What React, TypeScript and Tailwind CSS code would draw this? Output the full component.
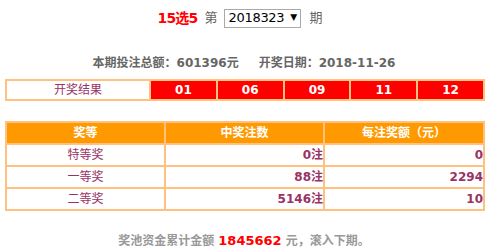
const font = { fontFamily: '"DejaVu Sans", "Noto Sans CJK SC", sans-serif' }

const balls = ['01', '06', '09', '11', '12']

const prizes = [
  { name: '特等奖', count: '0注', amount: '0' },
  { name: '一等奖', count: '88注', amount: '2294' },
  { name: '二等奖', count: '5146注', amount: '10' },
]

export default function App() {
  return (
    <div className="w-[488px] h-[249px] bg-white text-[12px]" style={font}>
      {/* issue picker */}
      <div className="flex items-center justify-center pt-2 pr-[8px] h-[28px]">
        <span className="text-[#ff0000] font-bold text-[14px] tracking-[-0.8px]">15选5</span>
        <span className="ml-[7px] text-[#666] text-[13px]">第</span>
        <div className="ml-[6px] w-[77px] h-[19px] border border-[#a9a9a9] flex items-center pl-[4px] text-[13px] text-black">
          <span className="tracking-[-0.3px]">2018323</span>
          <span className="ml-[6px] text-[9px]">▼</span>
        </div>
        <span className="ml-[9px] text-[#666] text-[13px]">期</span>
      </div>

      <div className="mt-[26px] flex justify-center text-[12px] font-bold text-[#666] leading-[18px]">
        <span>本期投注总额：601396元</span>
        <span className="ml-[20px]">开奖日期：2018-11-26</span>
      </div>

      {/* draw result */}
      <div className="mt-[7px] ml-[5px] w-[480px] bg-[#ffc080] p-[2px] grid grid-cols-[142px_repeat(5,1fr)] gap-[2px]">
        <div className="bg-white h-[18px] flex items-center justify-center text-[#993366] text-[12px]">开奖结果</div>
        {balls.map(b => (
          <div key={b} className="bg-[#ff0000] h-[18px] flex items-center justify-center text-white font-bold text-[12px]">
            {b}
          </div>
        ))}
      </div>

      {/* prize table */}
      <div className="mt-[20px] ml-[5px] w-[480px] bg-[#ffc080] p-[2px] grid grid-cols-[157px_157px_158px] gap-[2px]">
        <div className="bg-[#ff9900] h-[20px] flex items-center justify-center text-white font-bold">奖等</div>
        <div className="bg-[#ff9900] h-[20px] flex items-center justify-center text-white font-bold">中奖注数</div>
        <div className="bg-[#ff9900] h-[20px] flex items-center justify-center text-white font-bold">每注奖额（元）</div>
        {prizes.map(p => (
          <div key={p.name} className="contents">
            <div className="bg-white h-[20px] flex items-center justify-center text-[#993366]">{p.name}</div>
            <div className="bg-white h-[20px] flex items-center justify-end text-[#993366] font-bold">{p.count}</div>
            <div className="bg-white h-[20px] flex items-center justify-end text-[#993366] font-bold">{p.amount}</div>
          </div>
        ))}
      </div>

      <div className="mt-[21px] text-center text-[12px] font-bold text-[#999] leading-[18px]">
        奖池资金累计金额 <span className="text-[#ff0000] text-[13px]">1845662</span> 元，滚入下期。
      </div>
    </div>
  )
}
